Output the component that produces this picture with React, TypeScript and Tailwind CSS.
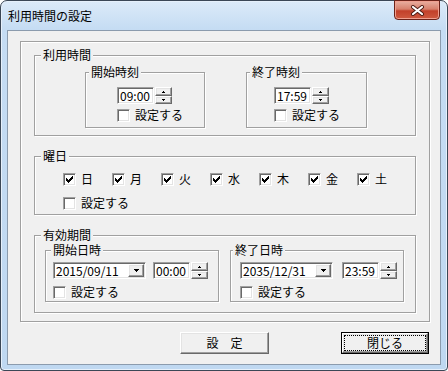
import React from "react";

const font = "font-['Noto_Sans_CJK_JP','Noto_Sans_CJK_SC',sans-serif]";

// classic win32 3D edges
const raised =
  "bg-[#f0f0f0] border border-t-white border-l-white border-r-[#696969] border-b-[#696969] shadow-[inset_-1px_-1px_0_#a0a0a0,inset_1px_1px_0_#e3e3e3]";
const sunken =
  "bg-white border border-t-[#a0a0a0] border-l-[#a0a0a0] border-r-white border-b-white shadow-[inset_1px_1px_0_#696969,inset_-1px_-1px_0_#e3e3e3]";

function Group({
  label,
  labelPos = "left-[6px]",
  className = "",
  children,
}: {
  label?: string;
  labelPos?: string;
  className?: string;
  children?: React.ReactNode;
}) {
  return (
    <div
      className={`relative border border-[#a0a0a0] shadow-[inset_1px_1px_0_#fff,1px_1px_0_#fff] ${className}`}
    >
      {label && (
        <span
          className={`absolute top-[-8px] px-[2px] bg-[#f0f0f0] leading-[14px] whitespace-nowrap ${labelPos}`}
        >
          {label}
        </span>
      )}
      {children}
    </div>
  );
}

function CheckBox({ checked = false, label }: { checked?: boolean; label: string }) {
  return (
    <div className="flex items-center gap-[5px] leading-[14px]">
      <span className={`w-[13px] h-[13px] shrink-0 flex items-center justify-center ${sunken}`}>
        {checked && (
          <svg width="7" height="7" viewBox="0 0 7 7" shapeRendering="crispEdges">
            <path
              fill="#000"
              d="M6 0h1v1h-1zM5 1h2v1h-2zM0 2h1v1h-1zM4 2h3v1h-3zM0 3h2v1h-2zM3 3h3v1h-3zM0 4h5v1h-5zM1 5h3v1h-3zM2 6h1v1h-1z"
            />
          </svg>
        )}
      </span>
      <span className="whitespace-nowrap">{label}</span>
    </div>
  );
}

function Spin() {
  return (
    <div className="flex flex-col w-[17px] h-[17px] ml-[1px]">
      <span className={`h-[9px] flex items-center justify-center ${raised}`}>
        <svg width="3" height="2" viewBox="0 0 3 2" shapeRendering="crispEdges">
          <path fill="#000" d="M1 0h1v1h1v1h-3v-1h1z" />
        </svg>
      </span>
      <span className={`h-[8px] flex items-center justify-center ${raised}`}>
        <svg width="3" height="2" viewBox="0 0 3 2" shapeRendering="crispEdges">
          <path fill="#000" d="M0 0h3v1h-1v1h-1v-1h-1z" />
        </svg>
      </span>
    </div>
  );
}

function TimeBox({ value }: { value: string }) {
  return (
    <div className="flex">
      <div className={`w-[37px] h-[17px] pl-[2px] leading-[15px] ${sunken}`}>{value}</div>
      <Spin />
    </div>
  );
}

function DateCombo({ value }: { value: string }) {
  return (
    <div className={`w-[93px] h-[17px] flex items-center justify-between pl-[2px] pr-[1px] ${sunken}`}>
      <span className="leading-[15px]">{value}</span>
      <span className={`w-[16px] h-[13px] flex items-center justify-center ${raised}`}>
        <svg width="5" height="3" viewBox="0 0 5 3" shapeRendering="crispEdges">
          <path fill="#000" d="M0 0h5v1h-1v1h-1v1h-1v-1h-1v-1h-1z" />
        </svg>
      </span>
    </div>
  );
}

export default function App() {
  const days = ["日", "月", "火", "水", "木", "金", "土"];

  return (
    <div className={`${font} text-[12px] text-black`}>
      <div className="relative w-[448px] h-[371px] flex flex-col border border-[#3b4756] rounded-t-[7px] rounded-b-[4px] bg-[linear-gradient(180deg,#dceaf9_0px,#c5dcf3_28px,#bfd8f1_100%)] shadow-[inset_0_0_0_1px_#e6f0fb]">
        {/* title bar */}
        <div className="h-[29px] shrink-0 flex items-center pl-[7px]">利用時間の設定</div>
        <div className="absolute top-[-1px] right-[7px] w-[46px] h-[20px] rounded-b-[4px] border border-[#6b2219] bg-[linear-gradient(180deg,#e9b0a2_0%,#d7806c_45%,#c2402a_55%,#cf5a40_100%)] shadow-[inset_0_0_0_1px_#f0a090] flex items-center justify-center">
          <svg width="15" height="11" viewBox="0 0 15 11">
            <path d="M3 2L12 9M12 2L3 9" stroke="#4a1a12" strokeWidth="4" strokeLinecap="round" />
            <path d="M3 2L12 9M12 2L3 9" stroke="#fff" strokeWidth="2.2" strokeLinecap="round" />
          </svg>
        </div>

        {/* client area */}
        <div className="ml-[6px] w-[434px] h-[335px] border border-[#8b9bad] bg-[#f0f0f0] flex flex-col">
          <Group className="ml-[12px] mt-[10px] w-[410px] h-[281px] flex flex-col">
            {/* 利用時間 */}
            <Group label="利用時間" className="ml-[13px] mt-[13px] w-[382px] h-[81px] flex pl-[50px] pt-[16px]">
              <Group label="開始時刻" labelPos="left-[3px]" className="w-[120px] h-[56px] pl-[31px] pt-[14px]">
                <TimeBox value="09:00" />
                <div className="mt-[4px]">
                  <CheckBox label="設定する" />
                </div>
              </Group>
              <Group label="終了時刻" labelPos="left-[3px]" className="ml-[41px] w-[121px] h-[56px] pl-[27px] pt-[14px]">
                <TimeBox value="17:59" />
                <div className="mt-[4px]">
                  <CheckBox label="設定する" />
                </div>
              </Group>
            </Group>

            {/* 曜日 */}
            <Group label="曜日" className="ml-[13px] mt-[20px] w-[382px] h-[59px] pl-[28px] pt-[15px]">
              <div className="flex">
                {days.map((d) => (
                  <div key={d} className="w-[49px]">
                    <CheckBox checked label={d} />
                  </div>
                ))}
              </div>
              <div className="mt-[10px]">
                <CheckBox label="設定する" />
              </div>
            </Group>

            {/* 有効期間 */}
            <Group label="有効期間" className="ml-[13px] mt-[20px] w-[382px] h-[78px] flex pl-[10px] pt-[14px]">
              <Group label="開始日時" labelPos="left-[5px]" className="w-[174px] h-[52px] pl-[7px] pt-[11px]">
                <div className="flex gap-[7px]">
                  <DateCombo value="2015/09/11" />
                  <TimeBox value="00:00" />
                </div>
                <div className="mt-[6px]">
                  <CheckBox label="設定する" />
                </div>
              </Group>
              <Group label="終了日時" labelPos="left-[2px]" className="ml-[11px] w-[174px] h-[52px] pl-[9px] pt-[11px]">
                <div className="flex gap-[9px]">
                  <DateCombo value="2035/12/31" />
                  <TimeBox value="23:59" />
                </div>
                <div className="mt-[6px]">
                  <CheckBox label="設定する" />
                </div>
              </Group>
            </Group>
          </Group>

          {/* buttons */}
          <div className="flex mt-[10px] ml-[172px]">
            <button className={`w-[89px] h-[22px] flex items-center justify-center ${raised}`}>設　定</button>
            <button className="ml-[72px] w-[88px] h-[22px] border border-black p-0">
              <div className={`w-full h-full p-[1px] ${raised}`}>
                <div className="w-full h-full border border-dotted border-black flex items-center justify-center leading-[14px]">
                  閉じる
                </div>
              </div>
            </button>
          </div>
        </div>
      </div>
    </div>
  );
}
